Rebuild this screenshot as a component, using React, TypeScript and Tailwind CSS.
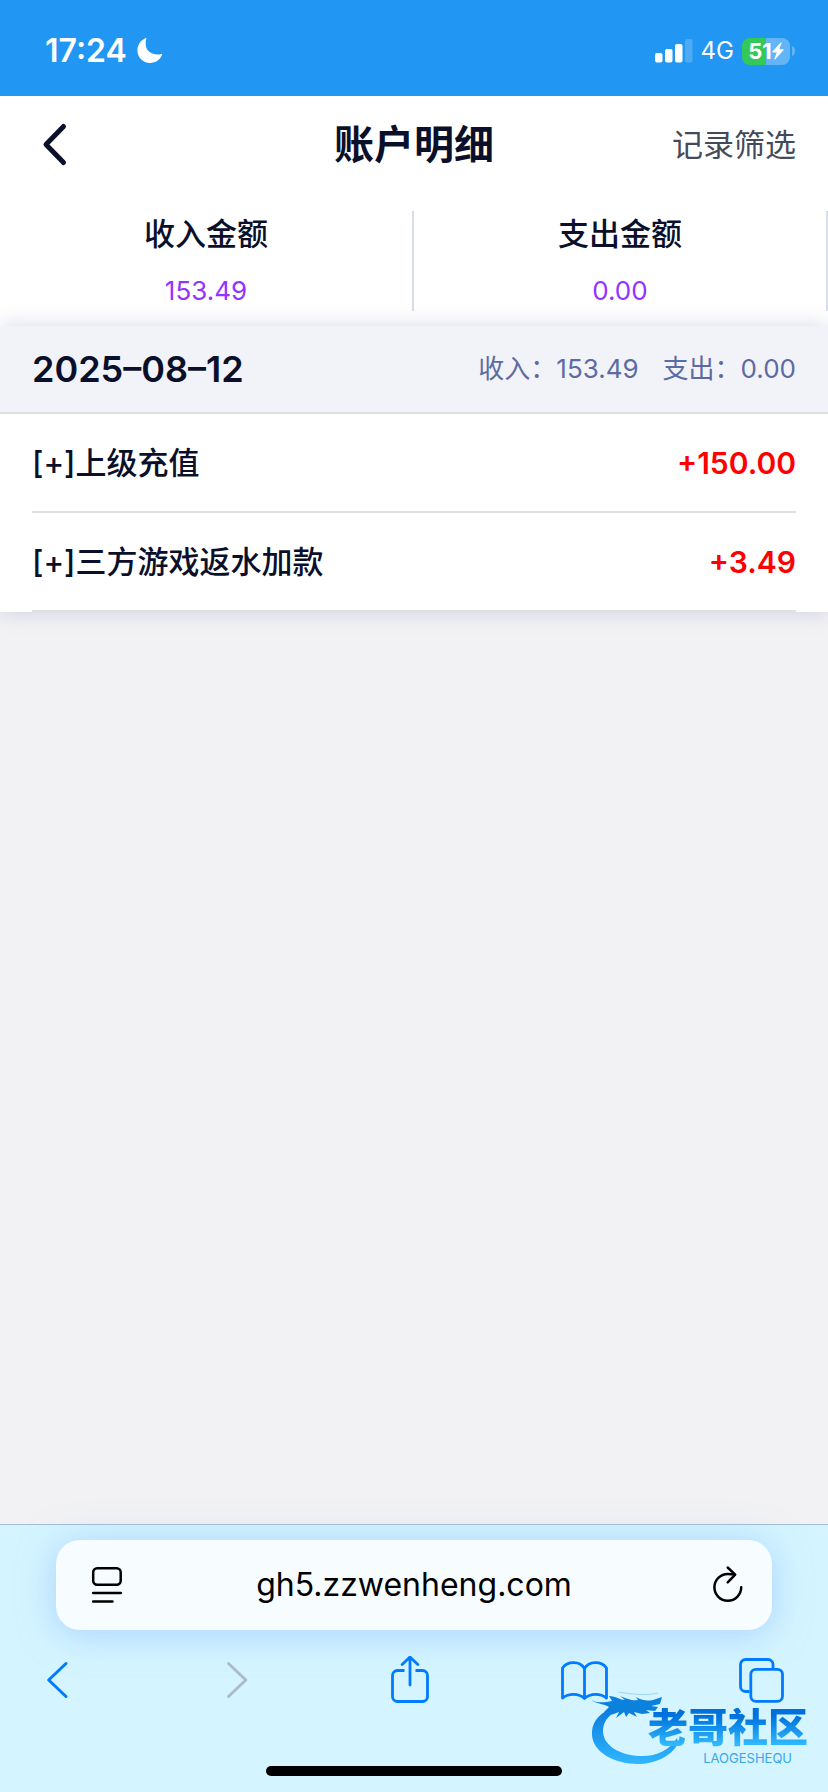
import * as React from "react";

interface RecordItem {
  title: string;
  amount: string;
}

interface SummaryProps {
  label: string;
  value: string;
}

const records: RecordItem[] = [
  { title: "[+]上级充值", amount: "+150.00" },
  { title: "[+]三方游戏返水加款", amount: "+3.49" },
];

const StatusBar: React.FC = () => (
  <div className="flex h-24 items-center justify-between bg-[#2196f3] pr-8 pl-[45px] text-white">
    <div className="flex items-center gap-2 pt-1.5">
      <span className="text-[32px] leading-10 font-semibold">17:24</span>
      <svg className="h-7 w-7" viewBox="0 0 28 28" fill="currentColor">
        <path d="M11.4 1.2C9.8 7.6 11 12 14.4 14.8c3.2 2.6 7.4 3.4 12 2.2.6-.1.9.1.6.8C25.2 22.8 20.6 26 15 26 8 26 2.4 20.4 2.4 13.6 2.4 8 5.6 3.4 10.4 1.3c.7-.3 1.1-.2 1-.1z" />
      </svg>
    </div>
    <div className="flex items-center gap-2 pt-1.5">
      <svg className="h-6 w-[38px]" viewBox="0 0 38 24" fill="currentColor">
        <rect x="0" y="14" width="7.5" height="9.5" rx="2" />
        <rect x="10" y="10" width="7.5" height="13.5" rx="2" />
        <rect x="20" y="5" width="7.5" height="18.5" rx="2" />
        <rect x="30" y="0" width="7.5" height="23.5" rx="2" opacity="0.2" />
      </svg>
      <span className="text-2xl leading-8">4G</span>
      <div className="flex items-center gap-0.5">
        <div className="flex h-[27px] w-12 items-center justify-center rounded-lg bg-linear-to-r from-[#34c759] from-50% to-[#64b5f7] to-50%">
          <span className="text-[22px] leading-7 font-bold">51</span>
          <svg className="h-[18px] w-3" viewBox="0 0 12 18" fill="currentColor">
            <path d="M8.8.4.4 9.6c-.3.4-.1.9.4.9h4L2.4 16.8c-.2.7.4 1 .9.5l8.3-9.2c.4-.4.1-.9-.4-.9H7.3L9.6.9C9.8.3 9.3-.1 8.8.4z" />
          </svg>
        </div>
        <svg className="h-2.5 w-1" viewBox="0 0 4 10" fill="#64b5f7">
          <path d="M0 0c2 .6 3 2.6 3 5s-1 4.4-3 5z" />
        </svg>
      </div>
    </div>
  </div>
);

const Summary: React.FC<SummaryProps> = ({ label, value }) => (
  <div className="flex-1 border-r-2 border-[#d9ddea] text-center">
    <div className="text-[31px] leading-[46px] font-medium">{label}</div>
    <div className="mt-3.5 text-[26px] leading-10 text-[#9333ff]">{value}</div>
  </div>
);

// Dragon ring with the community name on top of it
const CommunityLogo: React.FC = () => (
  <div className="pointer-events-none absolute right-2 bottom-6 h-[76px] w-[228px]">
    <svg className="h-[76px] w-[228px]" viewBox="0 0 228 76">
      <defs>
        <linearGradient id="ring" x1="0" y1="0" x2="0" y2="1">
          <stop offset="0" stopColor="#0878dc" />
          <stop offset="1" stopColor="#2fb7ff" />
        </linearGradient>
      </defs>
      <path
        fill="url(#ring)"
        d="M24 14C8 20-1 30 0 43c1 17 22 29 46 29 18 0 33-8 40-20l-1-6c-8 13-22 19-38 18C27 63 11 53 11 39c0-10 7-19 22-24z"
      />
      <path
        fill="#0c80dd"
        d="M-2 7c6 4 13 4 22 2l-3-5c7 0 11 4 16 4l-5-4c8 3 12 5 18 4l-2-3c7 4 12 4 17 3l9-3-2 7-9 2 7 1-3 4-9-1 4 3-8 1-8-2 3 5-8-4-3 4-2-5-8 6 3-6-8 3 3-5-10 2 5-5C14 12 4 12-2 7z"
      />
      <path d="M26 0C40 2 54 4 66 1" fill="none" stroke="#9bd6f7" strokeWidth="1" />
    </svg>
    <div className="absolute top-4 right-3 flex flex-col items-end gap-1">
      <span className="bg-linear-to-b from-[#0071dc] from-20% to-[#2fb7ff] to-90% bg-clip-text text-[40px] leading-10 font-black text-transparent">
        老哥社区
      </span>
      <span className="pr-4 text-[13px] leading-3 text-[#3ba5ea]">LAOGESHEQU</span>
    </div>
  </div>
);

const BrowserBar: React.FC = () => (
  <footer className="relative border-t border-[#a3bdd2] bg-[#d4f5ff] pb-4">
    <div className="mx-14 mt-[15px] flex h-[90px] items-center rounded-3xl bg-[#f7fcff] px-5 shadow-[0_4px_36px_rgba(130,175,255,0.5)]">
      <button aria-label="页面菜单" className="h-12 w-12 shrink-0">
        <svg viewBox="0 0 48 48" fill="none" stroke="black" strokeWidth="2.5" strokeLinecap="round">
          <rect x="17.2" y="7.2" width="27.5" height="16.5" rx="4" />
          <path d="M17.2 32h27.6M17.2 40.5h19.3" />
        </svg>
      </button>
      <input
        aria-label="网址"
        type="text"
        defaultValue="gh5.zzwenheng.com"
        className="min-w-0 flex-1 bg-transparent text-center text-[32px] leading-10 text-black outline-none"
      />
      <button aria-label="重新加载" className="h-12 w-12 shrink-0">
        <svg
          viewBox="0 0 48 48"
          fill="none"
          stroke="black"
          strokeWidth="2.5"
          strokeLinecap="round"
          strokeLinejoin="round"
        >
          <path d="M37.2 26.3A13.4 13.4 0 1 1 23.8 12.9C26.5 12.9 28.5 13.1 30.4 13.6" />
          <path d="M23.7 6.500l7.500 7.200-7.500 7.600" />
        </svg>
      </button>
    </div>
    <nav className="mt-[26px] flex justify-between pr-11 pl-8 text-[#007aff]">
      <button aria-label="后退" className="h-12 w-12">
        <svg viewBox="0 0 48 48" fill="none" stroke="currentColor" strokeWidth="3" strokeLinecap="round" strokeLinejoin="round">
          <path d="M34 7.5 16.7 24 34 40.5" />
        </svg>
      </button>
      <button aria-label="前进" disabled className="h-12 w-12 text-[#abbccb]">
        <svg viewBox="0 0 48 48" fill="none" stroke="currentColor" strokeWidth="3" strokeLinecap="round" strokeLinejoin="round">
          <path d="M20.5 7.5 37.8 24 20.5 40.5" />
        </svg>
      </button>
      <button aria-label="分享" className="h-12 w-12">
        <svg viewBox="0 0 48 48" fill="none" stroke="currentColor" strokeWidth="2.8" strokeLinecap="round" strokeLinejoin="round">
          <path d="M20.5 14.5h-7a5 5 0 0 0-5 5v21a5 5 0 0 0 5 5h25a5 5 0 0 0 5-5v-21a5 5 0 0 0-5-5h-7" strokeLinecap="butt" />
          <path d="M26 29V1.5M18.2 8.500 26 1l7.800 7.500" />
        </svg>
      </button>
      <button aria-label="书签" className="h-12 w-12">
        <svg viewBox="0 0 48 48" fill="none" stroke="currentColor" strokeWidth="2.8" strokeLinejoin="round">
          <path d="M24.5 12.5C20 4.8 7.5 4.8 2.5 12v30c6.5-4.8 16-4.8 22 .5 6-5.3 15.5-5.3 22-.5V12c-5-7.2-17.5-7.2-22 .5zM24.5 12.5v30" />
        </svg>
      </button>
      <button aria-label="标签页" className="h-12 w-12">
        <svg viewBox="0 0 48 48" fill="none" stroke="currentColor" strokeWidth="2.8">
          <path d="M13.5 35.5h-4a5 5 0 0 1-5-5v-22a5 5 0 0 1 5-5H32a5 5 0 0 1 5 5v4" />
          <rect x="14.8" y="13.3" width="31.7" height="32" rx="5" />
        </svg>
      </button>
    </nav>
    <div className="mx-auto mt-[62px] h-2.5 w-[296px] rounded-full bg-black" />
    <CommunityLogo />
  </footer>
);

const App: React.FC = () => {
  return (
    <div className="flex min-h-screen flex-col overflow-hidden bg-[#f2f2f4] font-[Inter,'Noto_Sans_CJK_SC',sans-serif] text-[#0b102a]">
      <StatusBar />

      <header className="grid h-[98px] grid-cols-[1fr_auto_1fr] items-center bg-white px-8">
        <button aria-label="返回" className="h-12 w-12">
          <svg
            viewBox="0 0 48 48"
            fill="none"
            stroke="currentColor"
            strokeWidth="5"
            strokeLinecap="round"
            strokeLinejoin="round"
          >
            <path d="M31.5 5.5 14 23.5l17.5 18" />
          </svg>
        </button>
        <h1 className="text-[40px] leading-[48px] font-bold">账户明细</h1>
        <button className="justify-self-end text-[31px] leading-10 text-[#454a5a]">记录筛选</button>
      </header>

      <section className="flex bg-white pt-[17px] pb-[15px]">
        <Summary label="收入金额" value="153.49" />
        <Summary label="支出金额" value="0.00" />
      </section>

      <main className="flex-1">
        <section className="bg-white shadow-[0_0_20px_rgba(90,105,160,0.25)]">
          <div className="flex h-[88px] items-center justify-between border-b-2 border-[#e0e0e0] bg-[#f2f3f9] px-8">
            <h2 className="text-[36px] leading-10 font-semibold">2025–08–12</h2>
            <div className="flex gap-6 text-[26px] leading-10 text-[#5d6ba3]">
              <span>收入：153.49</span>
              <span>支出：0.00</span>
            </div>
          </div>
          <ul className="px-8">
            {records.map((record) => (
              <li
                key={record.title}
                className="flex items-center justify-between border-b-2 border-[#e0e0e0] pt-[25px] pb-6 leading-[48px]"
              >
                <span className="text-[31px] font-medium">{record.title}</span>
                <span className="text-[30px] font-semibold text-[#ff0000]">{record.amount}</span>
              </li>
            ))}
          </ul>
        </section>
      </main>

      <BrowserBar />
    </div>
  );
};

export default App;
